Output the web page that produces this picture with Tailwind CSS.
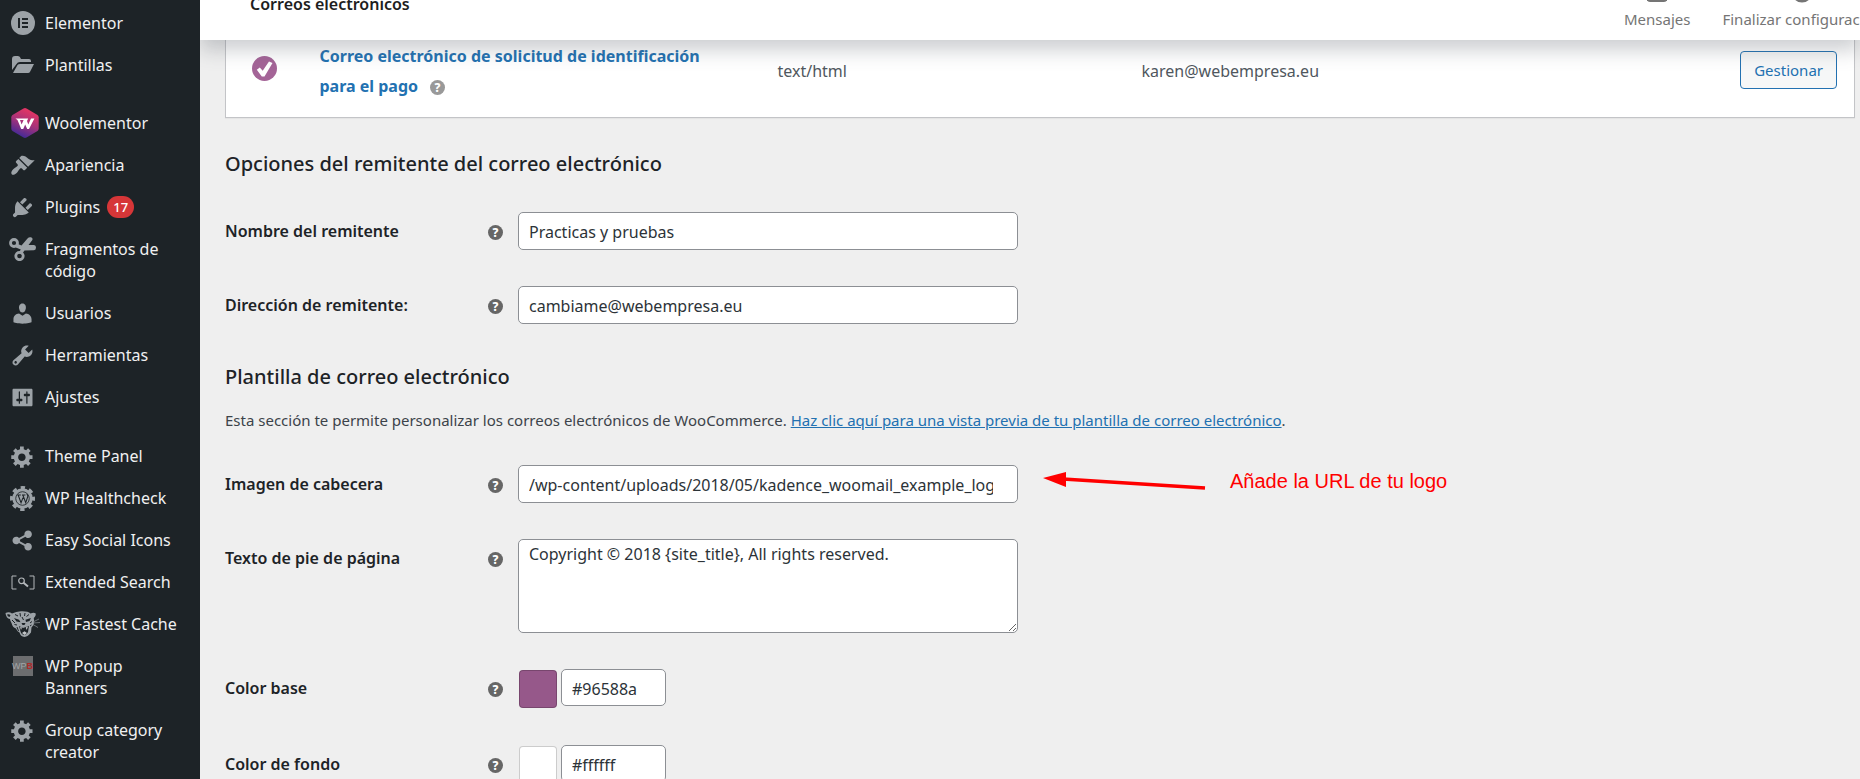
<!DOCTYPE html>
<html lang="es">
<head>
<meta charset="utf-8">
<title>Correos electrónicos</title>
<script src="https://cdn.jsdelivr.net/npm/@tailwindcss/browser@4"></script>
</head>
<body class="bg-[#efefef] font-['Noto_Sans',sans-serif] text-base text-[#3c434a]">
<svg class="hidden" aria-hidden="true">
  <symbol id="gear" viewBox="0 0 20 20"><path d="M18 12h-2.18c-.17.7-.44 1.35-.81 1.93l1.54 1.54-2.1 2.1-1.54-1.54c-.58.36-1.23.63-1.91.79V19H8v-2.18c-.68-.16-1.33-.43-1.91-.79l-1.54 1.54-2.12-2.12 1.54-1.54c-.36-.58-.63-1.23-.79-1.91H1V9.03h2.17c.16-.7.44-1.35.8-1.94L2.43 5.55l2.1-2.1 1.54 1.54c.58-.37 1.24-.64 1.93-.81V2h3v2.18c.68.16 1.33.43 1.91.79l1.54-1.54 2.12 2.12-1.54 1.54c.36.59.64 1.24.8 1.94H18V12zm-8.500 1.5c1.66 0 3-1.340 3-3s-1.340-3-3-3-3 1.340-3 3 1.340 3 3 3z"/></symbol>
</svg>
<div class="flex h-screen overflow-hidden">

  <nav aria-label="Menú principal" class="relative z-20 w-[200px] shrink-0 bg-[#1d2327] pt-[2px] leading-[22px] text-[#f0f0f1]">
    <ul>
      <li><a href="#" class="flex py-[10px]"><span class="flex h-[22px] w-[45px] shrink-0 items-center justify-center"><svg class="size-[24px] shrink-0" viewBox="0 0 24 24"><circle cx="12" cy="12" r="12" fill="#9ca2a7"/><path d="M7 7h2v10H7zM11 7h6v2h-6zM11 11h6v2h-6zM11 15h6v2h-6z" fill="#1d2327"/></svg></span>Elementor</a></li>
      <li><a href="#" class="flex py-[10px]"><span class="flex h-[22px] w-[45px] shrink-0 items-center justify-center"><svg class="h-[18px] w-[22px] shrink-0" viewBox="0 0 22 18" fill="#9ca2a7"><path d="M0 14V3q0-3 3-3h3q2 0 3 3h8q2 0 2 2v1H8Q5.500 6 4.500 8z"/><path d="M1 17 5.500 9Q6.200 8 8 8h14l-3.800 7.500Q17.500 17 16 17z"/></svg></span>Plantillas</a></li>
    </ul>
    <ul class="mt-4">
      <li><a href="#" class="flex py-[10px]"><span class="flex h-[22px] w-[45px] shrink-0 items-center justify-center pl-[5px]"><svg class="h-[30px] w-[28px] shrink-0" viewBox="0 0 28 30"><defs><linearGradient id="woo" x1="0.700" y1="0" x2="0.300" y2="1"><stop offset="0" stop-color="#ee3560"/><stop offset=".5" stop-color="#a5327a"/><stop offset="1" stop-color="#38299a"/></linearGradient></defs><path d="M12.500.5q1.500-.8 3 0L26.500 7q1.200.8 1.200 2.200v11.600q0 1.400-1.200 2.200l-11 6.500q-1.500.8-3 0L1.500 23Q.3 22.200.3 20.800V9.200Q.3 7.800 1.500 7z" fill="url(#woo)"/><path d="M4.500 10.500h9l-.8 1.500H9l1.600 4.500 2.700-6h3.900l-1.200 2.500 1.300 3.500 2.700-6h3.400L18 21h-1.800l-2-4.500-2 4.500h-2L6.500 12z" fill="#fff"/></svg></span>Woolementor</a></li>
      <li><a href="#" class="flex py-[10px]"><span class="flex h-[22px] w-[45px] shrink-0 items-center justify-center"><svg class="size-[25px] shrink-0" viewBox="0 0 20 20" fill="#9ca2a7"><path d="M14.480 11.060L7.410 3.990l1.500-1.500c.5-.56 2.300-.47 3.510.32 1.210.8 1.430 1.280 2.910 2.100 1.180.64 2.450 1.260 4.450.85zm-.71.71L6.700 4.700 4.930 6.470c-.39.39-.39 1.020 0 1.410l1.060 1.060c.39.39.39 1.030 0 1.420-.6.6-1.430 1.110-2.210 1.690-.35.26-.7.53-1.010.84C1.430 14.230.4 16.080 1.400 17.070c.99 1 2.840-.03 4.180-1.360.31-.31.58-.66.85-1.020.57-.78 1.080-1.610 1.690-2.210.39-.39 1.020-.39 1.410 0l1.060 1.060c.39.39 1.020.39 1.410 0z"/></svg></span>Apariencia</a></li>
      <li><a href="#" class="flex py-[10px]"><span class="flex h-[22px] w-[45px] shrink-0 items-center justify-center"><svg class="size-[25px] shrink-0" viewBox="0 0 20 20" fill="#9ca2a7"><path d="M13.110 4.360L9.870 7.600 8 5.730l3.240-3.240c.35-.34 1.050-.2 1.560.32.52.51.66 1.210.31 1.550zm-8 1.770l.91-1.120 9.010 9.010-1.190.84c-.71.71-2.630 1.160-3.820 1.160H6.140L4.900 17.260c-.59.59-1.540.59-2.120 0-.59-.58-.59-1.530 0-2.120l1.240-1.240v-3.880c0-1.130.4-3.190 1.090-3.890zm7.260 3.970l3.240-3.240c.34-.35 1.040-.21 1.550.31.52.51.66 1.210.31 1.550l-3.240 3.250z"/></svg></span>Plugins <span class="ml-[7px] h-[22px] rounded-full bg-[#d63638] px-[6px] text-[13px] font-medium text-white">17</span></a></li>
      <li><a href="#" class="flex py-[10px]"><span class="flex h-[22px] w-[45px] shrink-0 items-center justify-center"><svg class="h-[24px] w-[27px] shrink-0" viewBox="0 0 27 24"><g fill="none" stroke="#9ca2a7" stroke-width="2.800"><circle cx="5" cy="6" r="3.500"/><circle cx="10.500" cy="19" r="3.700"/></g><path d="M7.500 6.500 12.500 8.500l6-7Q20-.3 22 .3q2.500 1 1 3.200L19.500 8H25q2 0 2 2.500 0 2.500-2 2.700l-9.500.3-3 4-3-1.400 2.300-3.500-5-2z" fill="#9ca2a7"/></svg></span><span>Fragmentos de<br>código</span></a></li>
      <li><a href="#" class="flex py-[10px]"><span class="flex h-[22px] w-[45px] shrink-0 items-center justify-center"><svg class="size-[25px] shrink-0" viewBox="0 0 20 20" fill="#9ca2a7"><path d="M10 9.250c-2.270 0-2.730-3.440-2.730-3.440C7 4.020 7.820 2 9.970 2c2.160 0 2.980 2.020 2.710 3.810 0 0-.41 3.440-2.680 3.440zm0 2.570L12.720 10c2.390 0 4.520 2.330 4.520 4.530v2.490s-3.650 1.130-7.240 1.130c-3.650 0-7.240-1.130-7.240-1.130v-2.490c0-2.250 1.940-4.480 4.470-4.480z"/></svg></span>Usuarios</a></li>
      <li><a href="#" class="flex py-[10px]"><span class="flex h-[22px] w-[45px] shrink-0 items-center justify-center"><svg class="size-[25px] shrink-0" viewBox="0 0 20 20" fill="#9ca2a7"><path d="M16.680 9.770c-1.340 1.340-3.300 1.670-4.950.99l-5.410 6.520c-.99.99-2.590.99-3.580 0s-.99-2.590 0-3.570l6.520-5.420c-.68-1.650-.35-3.610.99-4.950 1.280-1.280 3.120-1.620 4.720-1.060l-2.890 2.890 2.820 2.820 2.860-2.870c.53 1.580.18 3.390-1.080 4.650zM3.810 16.210c.4.39 1.040.39 1.430 0 .4-.4.4-1.040 0-1.430-.39-.4-1.030-.4-1.430 0-.39.39-.39 1.030 0 1.430z"/></svg></span>Herramientas</a></li>
      <li><a href="#" class="flex py-[10px]"><span class="flex h-[22px] w-[45px] shrink-0 items-center justify-center"><svg class="size-[25px] shrink-0" viewBox="0 0 20 20" fill="#9ca2a7"><path d="M18 16V4c0-.55-.45-1-1-1H3c-.55 0-1 .45-1 1v12c0 .55.45 1 1 1h14c.55 0 1-.45 1-1zM8 11h1c.55 0 1 .45 1 1s-.45 1-1 1H8v1.500c0 .28-.22.5-.5.5s-.5-.22-.5-.5V13H6c-.55 0-1-.45-1-1s.45-1 1-1h1V5.500c0-.28.22-.5.5-.5s.5.22.5.5V11zm5-2h-1c-.55 0-1-.45-1-1s.45-1 1-1h1V5.500c0-.28.22-.5.5-.5s.5.22.5.5V7h1c.55 0 1 .45 1 1s-.45 1-1 1h-1v5.500c0 .28-.22.5-.5.5s-.5-.22-.5-.5V9z"/></svg></span>Ajustes</a></li>
    </ul>
    <ul class="mt-[17px]">
      <li><a href="#" class="flex py-[10px]"><span class="flex h-[22px] w-[45px] shrink-0 items-center justify-center"><svg class="size-[25px] shrink-0" fill="#9ca2a7"><use href="#gear"/></svg></span>Theme Panel</a></li>
      <li><a href="#" class="flex py-[10px]"><span class="flex h-[22px] w-[45px] shrink-0 items-center justify-center"><svg class="size-[25px] shrink-0" viewBox="0 0 24 24"><circle cx="12" cy="12" r="9.800" fill="#9ca2a7"/><circle cx="12" cy="12" r="10.500" fill="none" stroke="#9ca2a7" stroke-width="3" stroke-dasharray="4.200 4.050" stroke-dashoffset="2.100"/><circle cx="12" cy="12" r="6.500" fill="none" stroke="#1d2327" stroke-width=".8"/><path d="M7 8.700h3.400M11.500 8.700h3.300M7.900 8.900l2.700 7.200 1.900-5M12.400 8.900l2.700 7.200 2-6q.1-1.400-1-2.500" fill="none" stroke="#1d2327" stroke-width="1"/></svg></span>WP Healthcheck</a></li>
      <li><a href="#" class="flex py-[10px]"><span class="flex h-[22px] w-[45px] shrink-0 items-center justify-center"><svg class="size-[25px] shrink-0" viewBox="0 0 20 20" fill="#9ca2a7"><path d="M14.500 12c1.660 0 3 1.340 3 3s-1.340 3-3 3-3-1.340-3-3c0-.24.03-.46.09-.69l-4.380-2.300c-.55.61-1.330.99-2.210.99-1.660 0-3-1.340-3-3s1.340-3 3-3c.88 0 1.660.39 2.210.99l4.380-2.300c-.06-.23-.09-.45-.09-.69 0-1.660 1.340-3 3-3s3 1.340 3 3-1.340 3-3 3c-.88 0-1.660-.39-2.210-.99l-4.380 2.300c.06.23.09.45.09.69s-.03.46-.09.69l4.380 2.300c.55-.61 1.330-.99 2.210-.99z"/></svg></span>Easy Social Icons</a></li>
      <li><a href="#" class="flex py-[10px]"><span class="flex h-[22px] w-[45px] shrink-0 items-center justify-center"><svg class="h-[15px] w-[24px] shrink-0" viewBox="0 0 24 15" fill="none" stroke="#b4b8bb"><path d="M5.500 1H1v13h4.500M18.500 1H23v13h-4.500"/><circle cx="10.500" cy="5.800" r="2.800" stroke-width="1.200"/><path d="m12.500 7.800 4.500 3.700" stroke-width="2"/></svg></span>Extended Search</a></li>
      <li><a href="#" class="flex py-[10px]"><span class="flex h-[22px] w-[45px] shrink-0 items-center justify-center"><svg class="h-[27px] w-[35px] shrink-0" viewBox="0 0 35 27"><path d="M.5 2Q4 .3 7 2.500q4-2 9-2.200Q23 0 25.500 2.500q3-1.500 5-.2 1 2-1.700 4.700l.4 4.500q-.2 3-2.700 5l-.5 5Q23 25.500 19.500 26q-4-.5-5-4.500-2.500-1-3.500-4-3.500-1-4.500-5.500Q5 9.500 5 8 1 7.500.5 2z" fill="#9ca2a7"/><path d="M2 3.500q2-1 3.500.7L4.500 6Q2.500 5.500 2 3.500zM9 7l5 1.700 1.500 2.500-4-.7zM20.500 8.700 26 7l-1.500 3-3.500 1zM16.500 12h4l-1 2h-2zM14 15l4 2 6-2-1 6q-1.500 3-3.500 3-3-.3-4-3.500z" fill="#1d2327"/><path d="m15 16 1 3 1-2.400zm8-.5-1.300 3.500-.9-2.600zM17 22l2.500-1.800L22 22l-2.500 2z" fill="#c3c6c9"/><path d="M10 3.500l3 1.500M15 2l.5 3.500M20 2l-.5 3M24 3.500l-2.500 2M7 9l3 3M9.500 13.500l2.500.5M12 16l1.500 4M25 12l2-1.500M25 15l1.500-1M17 6l1.500 3" stroke="#1d2327" fill="none"/><path d="m28 11 6-3M28 12l7-.5M28 13.500l5 3" stroke="#7d8388" stroke-width=".8"/></svg></span>WP Fastest Cache</a></li>
      <li><a href="#" class="flex py-[10px]"><span class="flex h-[22px] w-[45px] shrink-0 items-center justify-center"><span aria-hidden="true" class="flex size-[20px] items-center justify-center bg-[#6c6d6f] font-['Liberation_Sans',sans-serif] text-[9px] text-[#a3a5a7]">WP<b class="text-[#b02a2a]">B</b></span></span><span>WP Popup<br>Banners</span></a></li>
      <li><a href="#" class="flex py-[10px]"><span class="flex h-[22px] w-[45px] shrink-0 items-center justify-center"><svg class="size-[25px] shrink-0" fill="#9ca2a7"><use href="#gear"/></svg></span><span>Group category<br>creator</span></a></li>
    </ul>
  </nav>

  <div class="flex min-w-0 flex-1 flex-col">
    <header class="z-10 flex h-10 shrink-0 items-end bg-white shadow-[0_10px_20px_0_rgba(85,93,102,0.3)]">
      <h1 class="-mt-2 flex-1 self-start pl-[50px] leading-6 font-semibold text-[#1e1e1e]">Correos electrónicos</h1>
      <div class="flex h-10 w-[240px] items-end gap-8 overflow-hidden pb-[11px] pl-1 text-[15px] leading-5 whitespace-nowrap text-[#757575]">
        <button type="button" class="flex shrink-0 flex-col items-center gap-[7px]"><svg class="h-[22px] w-[20px]" viewBox="0 0 20 22" fill="none" stroke="#757575" stroke-width="2"><rect x="1" y="3" width="18" height="18" rx="2"/><path d="M1 16h18v4H1z" fill="#757575"/></svg>Mensajes</button>
        <button type="button" class="flex shrink-0 flex-col items-center gap-[6px]"><svg class="size-[22px]" viewBox="0 0 22 22" fill="none" stroke="#757575" stroke-width="3"><circle cx="11" cy="11" r="9"/></svg>Finalizar configuración</button>
      </div>
    </header>

    <main class="min-h-0 flex-1 pr-[5px] pl-[25px]">
      <table class="-mt-4 w-full border border-[#c3c4c7] bg-white text-left shadow-[0_1px_1px_rgba(0,0,0,0.04)]">
        <tbody>
          <tr>
            <td class="w-[94px] pb-[6px] pl-[26px]"><svg class="size-[25px]" viewBox="0 0 25 25" role="img" aria-label="Activado"><circle cx="12.500" cy="12.500" r="12.500" fill="#a46497"/><path d="m4.800 13.700 3-2.300 2.900 3.400L17 5.500l3.500 1.500-8 13.500h-2.700z" fill="#fff"/></svg></td>
            <td class="w-[458px] py-4 leading-[30px]"><a href="#" class="font-bold text-[#2271b1]">Correo electrónico de solicitud de identificación<br>para el pago</a><span role="img" aria-label="Ayuda" class="ml-3 inline-flex size-[15px] items-center justify-center rounded-full bg-[#999] align-middle text-xs leading-none font-extrabold text-white">?</span></td>
            <td class="w-[364px] text-[#50575e]">text/html</td>
            <td class="text-[#50575e]">karen@webempresa.eu</td>
            <td class="pr-[17px] pb-[2px] text-right"><button type="button" class="h-[38px] rounded-[4px] border border-[#2271b1] bg-[#f6f7f7] px-[13px] text-[15px] text-[#2271b1]">Gestionar</button></td>
          </tr>
        </tbody>
      </table>

      <form>
        <h2 class="mt-8 text-xl leading-7 font-medium text-[#1d2327]">Opciones del remitente del correo electrónico</h2>
        <div class="mt-[34px] flex flex-col gap-9">
          <div class="flex items-start">
            <label for="from-name" class="w-[263px] leading-[38px] font-semibold text-[#1d2327]">Nombre del remitente</label>
            <span role="img" aria-label="Ayuda" class="mt-[13px] mr-[15px] flex size-[15px] items-center justify-center rounded-full bg-[#666] text-xs leading-none font-extrabold text-white">?</span>
            <input id="from-name" type="text" value="Practicas y pruebas" class="h-[38px] w-[500px] rounded-[5px] border border-[#8c8f94] bg-white px-[10px] pt-[2px] text-[#2c3338]">
          </div>
          <div class="flex items-start">
            <label for="from-mail" class="w-[263px] leading-[38px] font-semibold text-[#1d2327]">Dirección de remitente:</label>
            <span role="img" aria-label="Ayuda" class="mt-[13px] mr-[15px] flex size-[15px] items-center justify-center rounded-full bg-[#666] text-xs leading-none font-extrabold text-white">?</span>
            <input id="from-mail" type="email" value="cambiame@webempresa.eu" class="h-[38px] w-[500px] rounded-[5px] border border-[#8c8f94] bg-white px-[10px] pt-[2px] text-[#2c3338]">
          </div>
        </div>

        <h2 class="mt-[39px] text-xl leading-7 font-medium text-[#1d2327]">Plantilla de correo electrónico</h2>
        <p class="mt-[17px] text-[15px] leading-6">Esta sección te permite personalizar los correos electrónicos de WooCommerce. <a href="#" class="text-[#2271b1] underline">Haz clic aquí para una vista previa de tu plantilla de correo electrónico</a>.</p>
        <div class="mt-[33px] flex flex-col gap-9">
          <div class="flex items-start">
            <label for="header-image" class="w-[263px] leading-[38px] font-semibold text-[#1d2327]">Imagen de cabecera</label>
            <span role="img" aria-label="Ayuda" class="mt-[13px] mr-[15px] flex size-[15px] items-center justify-center rounded-full bg-[#666] text-xs leading-none font-extrabold text-white">?</span>
            <input id="header-image" type="text" value="/wp-content/uploads/2018/05/kadence_woomail_example_logo.png" class="h-[38px] w-[500px] rounded-[5px] border border-[#8c8f94] bg-white pt-[2px] pr-6 pl-[10px] text-[#2c3338]">
            <svg class="mt-[5px] ml-[25px] h-[20px] w-[163px]" viewBox="0 0 163 20" aria-hidden="true"><path d="m20 9 142 9" stroke="#f00" stroke-width="3.500"/><path d="M0 8 23 2v15z" fill="#f00"/></svg>
            <span class="ml-6 font-['Liberation_Sans',sans-serif] text-xl leading-8 text-[#f00]">Añade la URL de tu logo</span>
          </div>
          <div class="flex items-start">
            <label for="footer-text" class="w-[263px] leading-[38px] font-semibold text-[#1d2327]">Texto de pie de página</label>
            <span role="img" aria-label="Ayuda" class="mt-[13px] mr-[15px] flex size-[15px] items-center justify-center rounded-full bg-[#666] text-xs leading-none font-extrabold text-white">?</span>
            <textarea id="footer-text" class="block h-[94px] w-[500px] resize rounded-[5px] border border-[#8c8f94] bg-white px-[10px] py-[2px] leading-6 text-[#2c3338]">Copyright © 2018 {site_title}, All rights reserved.</textarea>
          </div>
          <div class="flex h-10 items-start">
            <label for="base-color" class="w-[263px] leading-[38px] font-semibold text-[#1d2327]">Color base</label>
            <span role="img" aria-label="Ayuda" class="mt-[13px] mr-[15px] flex size-[15px] items-center justify-center rounded-full bg-[#666] text-xs leading-none font-extrabold text-white">?</span>
            <button type="button" aria-label="Elegir color base" class="mt-px mr-1 ml-px size-[38px] rounded-[4px] border border-black/20 bg-[#96588a]"></button>
            <input id="base-color" type="text" value="#96588a" class="h-[37px] w-[105px] rounded-[5px] border border-[#8c8f94] bg-white px-[10px] pt-[2px] text-[#2c3338]">
          </div>
          <div class="flex h-10 items-start">
            <label for="bg-color" class="w-[263px] leading-[38px] font-semibold text-[#1d2327]">Color de fondo</label>
            <span role="img" aria-label="Ayuda" class="mt-[13px] mr-[15px] flex size-[15px] items-center justify-center rounded-full bg-[#666] text-xs leading-none font-extrabold text-white">?</span>
            <button type="button" aria-label="Elegir color de fondo" class="mt-px mr-1 ml-px size-[38px] rounded-[4px] border border-black/20 bg-white"></button>
            <input id="bg-color" type="text" value="#ffffff" class="h-[37px] w-[105px] rounded-[5px] border border-[#8c8f94] bg-white px-[10px] pt-[2px] text-[#2c3338]">
          </div>
        </div>
      </form>
    </main>
  </div>
</div>
</body>
</html>
